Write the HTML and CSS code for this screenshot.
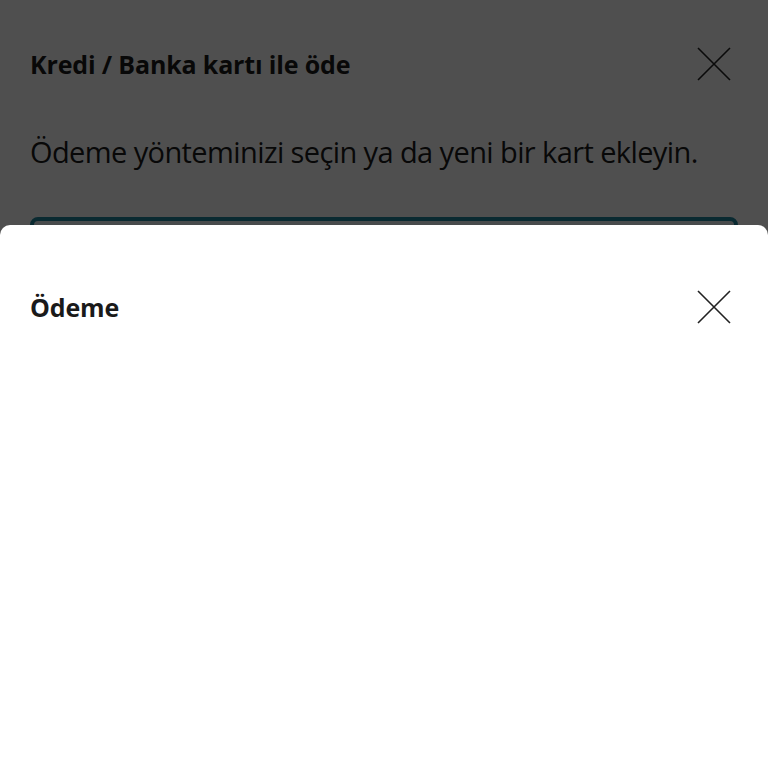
FILE: index.html
```html
<!DOCTYPE html>
<html lang="tr">
<head>
  <meta charset="UTF-8" />
  <title>Ödeme</title>
  <link rel="stylesheet" href="styles.css">
</head>
<body>
  <div class="page">
    <div class="header">
      <h1>Kredi / Banka kartı ile öde</h1>
      <button class="close">
        <svg width="34" height="34" viewBox="0 0 34 34"><path d="M1 1L33 33M33 1L1 33" stroke="currentColor" stroke-width="1.6" fill="none"/></svg>
      </button>
    </div>
    <p class="lead">Ödeme yönteminizi seçin ya da yeni bir kart ekleyin.</p>
    <div class="card"></div>
  </div>

  <div class="overlay"></div>

  <div class="sheet">
    <div class="header">
      <h2>Ödeme</h2>
      <button class="close">
        <svg width="34" height="34" viewBox="0 0 34 34"><path d="M1 1L33 33M33 1L1 33" stroke="currentColor" stroke-width="1.6" fill="none"/></svg>
      </button>
    </div>
  </div>
</body>
</html>
```

FILE: styles.css
```css
* {
  box-sizing: border-box;
}

body {
  margin: 0;
  height: 768px;
  overflow: hidden;
  background-color: #ffffff;
  font-family: "Open Sans", "Noto Sans", sans-serif;
  color: #1a1a1a;
}

.page {
  padding: 0 30px;
}

.header {
  display: flex;
  align-items: center;
  justify-content: space-between;
}

.page .header {
  height: 128px;
}

h1, h2 {
  margin: 0;
  font-size: 25px;
  font-weight: 700;
  letter-spacing: -0.15px;
}

.close {
  background: none;
  border: none;
  padding: 0;
  margin-right: 7px;
  width: 34px;
  height: 34px;
  color: #222222;
  cursor: pointer;
}

.lead {
  margin: 4px 0 0;
  font-size: 29px;
  font-weight: 400;
  letter-spacing: -0.6px;
}

.card {
  margin-top: 46px;
  height: 120px;
  border: 4px solid #20879f;
  border-radius: 8px;
  background-color: #e9f3f6;
}

.overlay {
  position: fixed;
  inset: 0;
  background-color: rgba(0, 0, 0, 0.69);
}

.sheet {
  position: fixed;
  left: 0;
  right: 0;
  top: 225px;
  bottom: 0;
  background-color: #ffffff;
  border-radius: 10px 10px 0 0;
  padding: 0 30px;
}

.sheet .header {
  height: 164px;
}
```
